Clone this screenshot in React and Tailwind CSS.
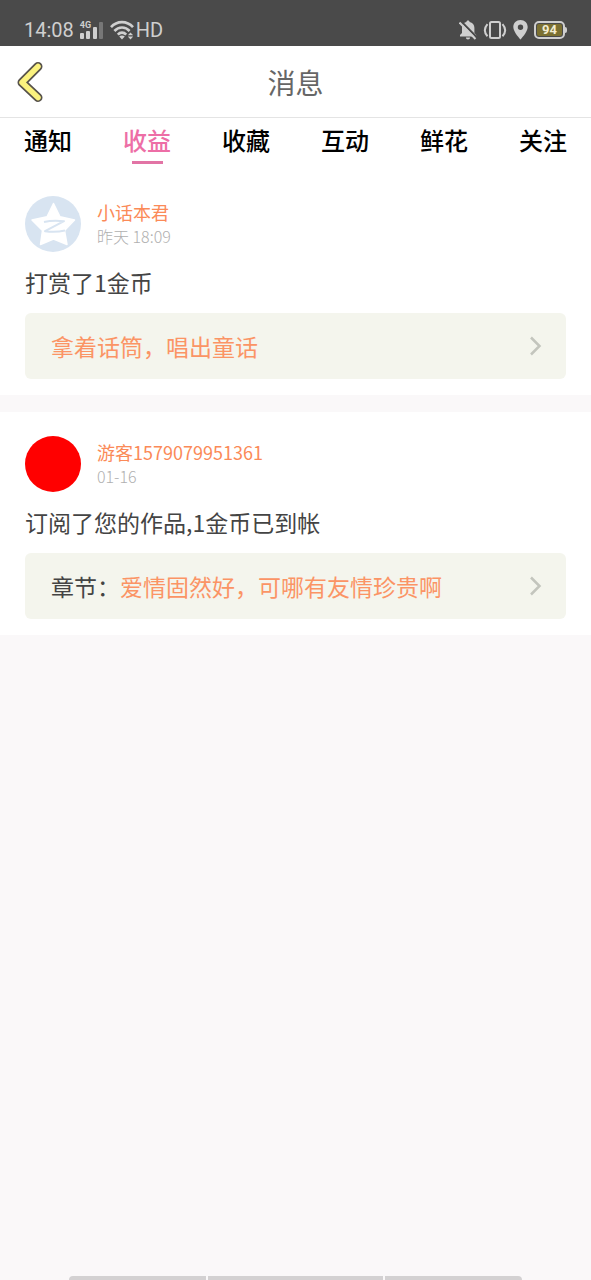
const tabs = ['通知', '收益', '收藏', '互动', '鲜花', '关注'];

const messages = [
    { id: 1, avatar: 'star', name: '小话本君', time: '昨天 18:09', text: '打赏了1金币', label: '', title: '拿着话筒，唱出童话' },
    { id: 2, avatar: 'red', name: '游客1579079951361', time: '01-16', text: '订阅了您的作品,1金币已到帐', label: '章节：', title: '爱情固然好，可哪有友情珍贵啊' },
];

function SignalIcon() {
    return (
        <svg width="24" height="18" viewBox="0 0 24 18" fill="#cfcfcf" aria-hidden="true">
            <rect x="0" y="12" width="4" height="6" rx="1" />
            <rect x="6" y="10" width="4" height="8" rx="1" />
            <rect x="13" y="6" width="4" height="12" rx="1" />
            <rect x="19" y="1" width="4" height="17" rx="1" fill="#777" />
        </svg>
    );
}

function WifiIcon() {
    return (
        <svg width="24" height="20" viewBox="0 0 24 20" fill="none" stroke="#cfcfcf" strokeWidth="2.6" aria-hidden="true">
            <path d="M1 7.2C7 .4 17 .4 23 7.2" />
            <path d="M4.4 11c4.2-4.6 11-4.6 15.2 0" />
            <path d="M7.8 14.6c2.4-2.6 6-2.6 8.4 0" />
            <path d="M9.2 16.4c1.6-1.2 4-1.2 5.6 0L12 19.4z" fill="#cfcfcf" stroke="none" />
            <path d="M20.5 12.4l2.7 2.9h-5.4zM20.5 19.4l2.7-2.9h-5.4z" fill="#cfcfcf" stroke="none" />
        </svg>
    );
}

function BellOffIcon() {
    return (
        <svg width="18" height="20" viewBox="0 0 18 20" fill="none" aria-hidden="true">
            <path d="M9 .5c1 0 1.6.6 1.6 1.6 3 .7 4.8 2.9 4.8 5.6v5.2l1.8 2.2v1.4H1v-1.4l2-2.2V7.7c0-2.7 1.4-4.9 4.4-5.6C7.4 1.1 8 .5 9 .5zM6.900 17.500h4.200c0 1.200-.9 2-2.100 2s-2.100-.8-2.100-2z" fill="#cfcfcf" />
            <path d="M1.5.8l17 17.200" stroke="#4a4a4a" strokeWidth="2" />
            <path d="M.5 2.5l16 16.500" stroke="#cfcfcf" strokeWidth="2" />
        </svg>
    );
}

function VibrateIcon() {
    return (
        <svg width="24" height="20" viewBox="0 0 24 20" fill="none" stroke="#cfcfcf" strokeWidth="2" aria-hidden="true">
            <rect x="7" y="2" width="10" height="16" rx="1.5" />
            <path d="M4.5 4.2c-3.3 3.8-3.3 8.4 0 12" />
            <path d="M19.5 4.2c3.3 3.8 3.3 8.4 0 12" />
        </svg>
    );
}

function PinIcon() {
    return (
        <svg width="15" height="20" viewBox="0 0 15 20" fill="#cfcfcf" aria-hidden="true">
            <path fillRule="evenodd" d="M7.5 0C3.3 0 .3 3.100.3 7.100c0 5 7.200 12.500 7.200 12.500s7.200-7.500 7.200-12.500C14.700 3.100 11.700 0 7.500 0zm0 4.500a2.700 2.700 0 1 1 0 5.400 2.700 2.700 0 0 1 0-5.400z" />
        </svg>
    );
}

function StatusBar() {
    return (
        <div className="flex h-[46px] items-center justify-between bg-[#4a4a4a] px-6 pt-3.5 font-['Roboto',sans-serif] text-xl text-[#cfcfcf]">
            <div className="flex items-center gap-1.5">
                <span>14:08</span>
                <span className="relative">
                    <SignalIcon />
                    <span className="absolute top-0 left-0 text-[9px] leading-2 font-bold">4G</span>
                </span>
                <WifiIcon />
                <span className="-ml-1">HD</span>
            </div>
            <div className="flex items-center gap-1.5">
                <BellOffIcon />
                <VibrateIcon />
                <PinIcon />
                <div className="flex items-center">
                    <div className="flex h-[18px] w-[31px] items-center justify-center rounded-[5px] border-2 border-[#cfcfcf] p-px">
                        <span className="flex h-full w-full items-center justify-center rounded-[2px] bg-[#7b7031] text-[13px] leading-3 font-bold text-[#f2ecd0]">94</span>
                    </div>
                    <div className="h-1.5 w-0.5 rounded-r-sm bg-[#cfcfcf]" />
                </div>
            </div>
        </div>
    );
}

function StarAvatar() {
    return (
        <svg className="size-14 shrink-0" viewBox="0 0 56 56" role="img" aria-label="小话本君">
            <circle cx="28" cy="28" r="28" fill="#d8e4f1" />
            <path d="M28.5 7.5l6.5 13.3 14.5 3.2-10 10.5 2.5 14-13.5-5.500-13 5.500 2-14L7 24l15-3.200z" fill="#fff" stroke="#fff" strokeLinejoin="round" strokeWidth="1.5" />
            <path d="M19 26c7-1.700 13-1.700 20-.8L20 35.200c6.500.8 13 .8 20-.7" fill="none" stroke="#d8e4f1" strokeWidth="2" strokeLinejoin="round" />
        </svg>
    );
}

function Message({ item }) {
    return (
        <article className="bg-white px-[25px] pt-6 pb-4">
            <div className="flex items-center gap-4">
                {item.avatar === 'star' ? <StarAvatar /> : <div className="size-14 shrink-0 rounded-full bg-[#ff0000]" />}
                <div>
                    <h2 className="text-lg leading-6 text-[#fb8a58]">{item.name}</h2>
                    <p className="text-base leading-6 font-light text-[#b0b0b0]">{item.time}</p>
                </div>
            </div>
            <p className="pt-4 pb-[17px] text-[23px] leading-7 text-[#444]">{item.text}</p>
            <a href="#" className="flex h-[66px] items-center justify-between rounded-md bg-[#f4f5ed] pr-6 pl-[26px] text-[23px]">
                <span className="text-[#fb9465]">
                    {item.label && <span className="text-[#444]">{item.label}</span>}
                    {item.title}
                </span>
                <svg width="14" height="20" viewBox="0 0 14 20" fill="none" stroke="#c3c5bd" strokeWidth="2.5" aria-hidden="true">
                    <path d="M3 1.5l8.5 8.5L3 18.5" />
                </svg>
            </a>
        </article>
    );
}

export default function App() {
    return (
        <div className="flex min-h-screen flex-col bg-[#faf8f9] font-['Noto_Sans_CJK_SC',sans-serif]">
            <StatusBar />

            <header className="grid h-[72px] grid-cols-[60px_1fr_60px] items-center border-b border-[#e4e4e4] bg-white">
                <button type="button" aria-label="返回" className="flex pl-4">
                    <svg width="28" height="42" viewBox="0 0 28 42" fill="none" strokeLinecap="round" strokeLinejoin="round" aria-hidden="true">
                        <path d="M22 5.5L6 21.5 22 36.5" stroke="#57524a" strokeWidth="9" />
                        <path d="M22 5.5L6 21.5 22 36.5" stroke="#fbf27e" strokeWidth="5.5" />
                    </svg>
                </button>
                <h1 className="text-center text-[28px] text-[#666]">消息</h1>
            </header>

            <nav className="flex h-[54px] justify-between bg-white px-6">
                {tabs.map((tab) => (
                    <button
                        key={tab}
                        type="button"
                        className={tab === '收益' ? 'flex flex-col items-center pt-2 text-2xl leading-7 font-medium text-[#ed6ea6]' : 'flex flex-col items-center pt-2 text-2xl leading-7 font-medium text-black'}
                    >
                        {tab}
                        {tab === '收益' && <span className="mt-[7px] h-[3px] w-[31px] bg-[#e274a5]" />}
                    </button>
                ))}
            </nav>

            <main className="flex flex-col gap-[17px]">
                {messages.map((item) => <Message key={item.id} item={item} />)}
            </main>

            {/* system gesture hints */}
            <div className="mt-auto flex justify-center gap-0.5 px-[69px]">
                <div className="h-1 flex-[137] rounded-tl-sm bg-[#d3d1d2]" />
                <div className="h-1 flex-[174] bg-[#d3d1d2]" />
                <div className="h-1 flex-[137] rounded-tr-sm bg-[#d3d1d2]" />
            </div>
        </div>
    );
}
